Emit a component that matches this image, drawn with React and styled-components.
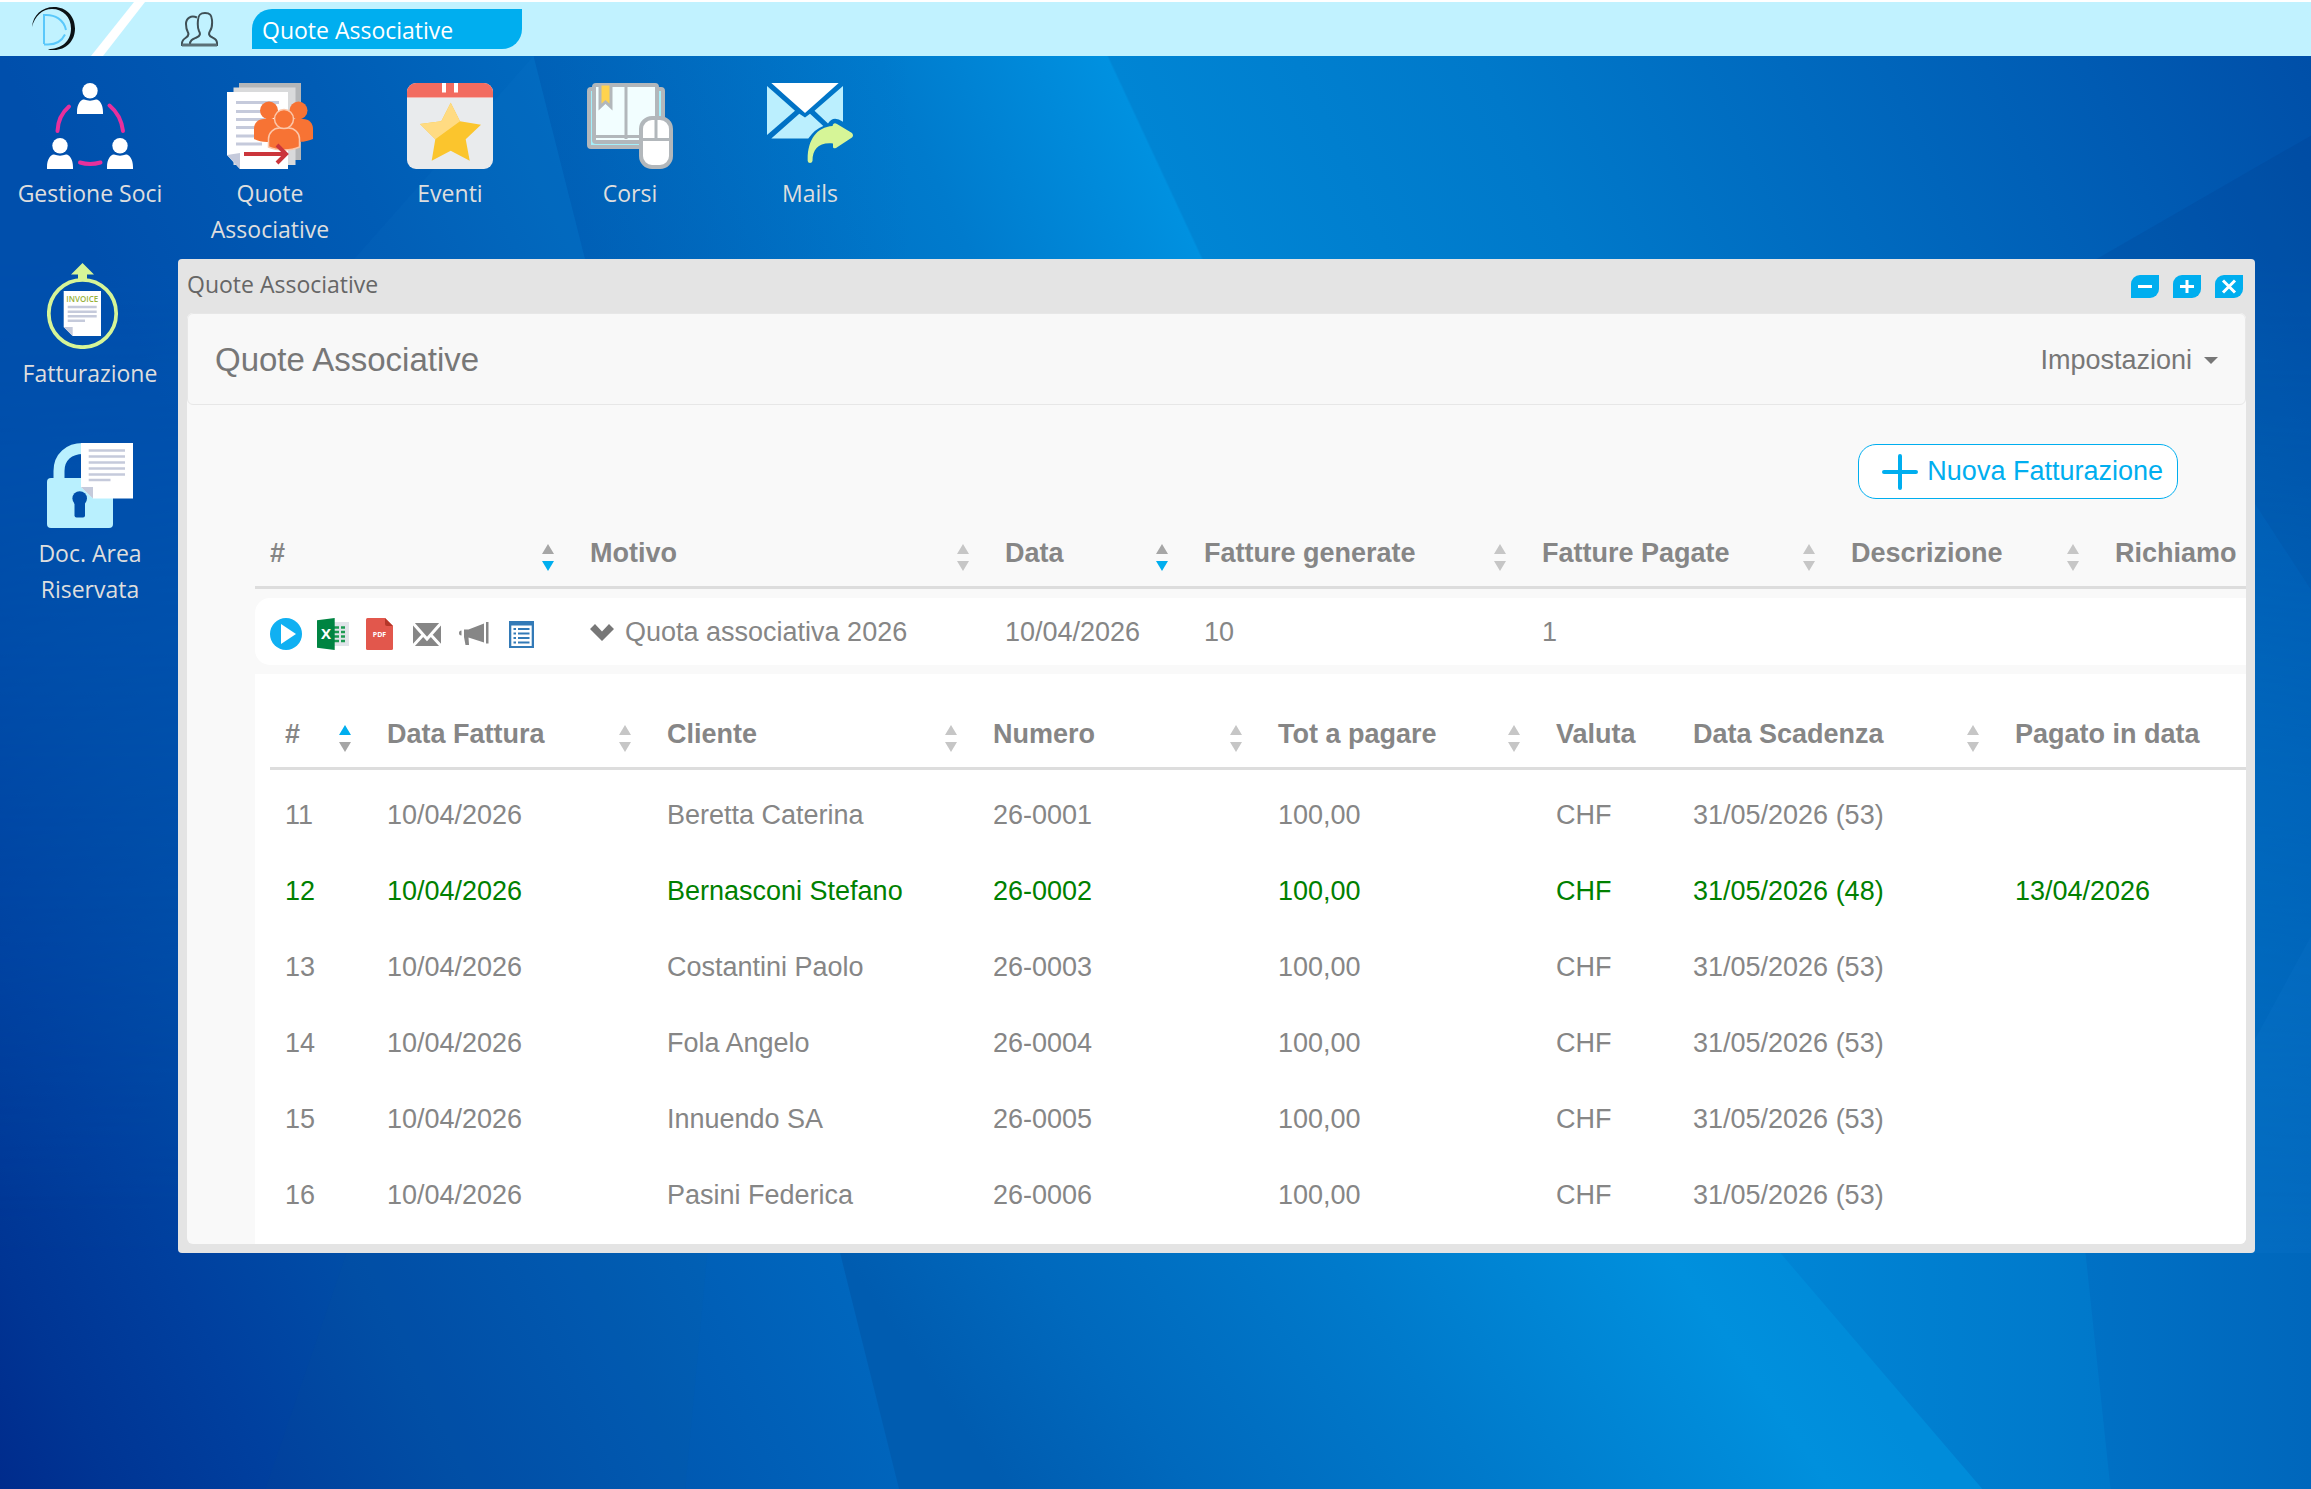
import React from "react";
import styled, { createGlobalStyle } from "styled-components";

const GlobalStyle = createGlobalStyle`
  * {
    box-sizing: border-box;
  }
  body {
    margin: 0;
    font-family: "Liberation Sans", Arial, sans-serif;
    font-size: 27px;
    color: #868686;
  }
  button {
    font: inherit;
    color: inherit;
    background: none;
    border: none;
    padding: 0;
    cursor: pointer;
  }
`;

const Page = styled.div`
  position: relative;
  min-height: 100vh;
  overflow: hidden;
`;

const WallpaperSvg = styled.svg`
  position: absolute;
  inset: 0;
  width: 100%;
  height: 100%;
  z-index: -1;
`;

/* ---------- top bar ---------- */

const TopBar = styled.header`
  display: flex;
  align-items: center;
  height: 56px;
  padding-left: 32px;
  background: #c1f2ff;
  border-top: 2px solid #fff;
`;
const LogoLink = styled.a`
  display: flex;
  margin-right: 15px;
`;
const Slash = styled.svg`
  width: 54px;
  height: 54px;
  margin-right: 36px;
`;
const UsersButton = styled.button`
  display: flex;
  margin-right: 34px;
`;
const TaskTab = styled.button`
  width: 270px;
  height: 40px;
  padding: 2px 0 0 10px;
  text-align: left;
  font-family: "Open Sans", sans-serif;
  font-size: 23px;
  font-weight: 500;
  line-height: 36px;
  color: #fff;
  background: #00aeef;
  border-radius: 20px 0 20px 0;
`;

/* ---------- desktop ---------- */

const Shortcuts = styled.nav`
  display: grid;
  grid-template-columns: repeat(5, 180px);
  grid-auto-rows: 180px;
  padding-top: 27px;
`;
const Shortcut = styled.button`
  grid-column: ${(props) => props.$column};
  grid-row: ${(props) => props.$row};
  display: flex;
  flex-direction: column;
  align-items: center;
  justify-content: flex-start;
  padding: 0 10px;
  font-family: "Open Sans", sans-serif;
  font-size: 23px;
  font-weight: 500;
  line-height: 36px;
  color: #dedede;
  svg {
    margin-bottom: 6px;
  }
`;

/* ---------- window ---------- */

const Window = styled.section`
  position: absolute;
  top: 259px;
  right: 56px;
  bottom: 236px;
  left: 178px;
  display: flex;
  flex-direction: column;
  padding: 0 9px 9px;
  background: #e4e4e4;
  border-radius: 4px;
`;
const TitleBar = styled.div`
  display: flex;
  justify-content: space-between;
  flex: 0 0 54px;
  padding-right: 3px;
`;
const WindowTitle = styled.h1`
  margin: 0;
  font-family: "Open Sans", sans-serif;
  font-size: 23px;
  font-weight: 500;
  line-height: 50px;
  color: #666;
`;
const WindowButtons = styled.div`
  display: flex;
  gap: 14px;
  padding-top: 16px;
`;
const WindowButton = styled.button`
  width: 28px;
  height: 23px;
  background: #00aeef;
  border-radius: 9px 0 9px 0;
  svg {
    display: block;
    margin: auto;
  }
`;
const WindowBody = styled.div`
  flex: 1;
  min-height: 0;
  overflow: hidden;
  background: #f9f9f9;
  border-radius: 6px;
`;
const NavBar = styled.div`
  display: flex;
  justify-content: space-between;
  align-items: center;
  height: 92px;
  padding: 2px 27px 0;
  background: #f8f8f8;
  border: 1px solid #e7e7e7;
  border-radius: 6px;
  color: #777;
`;
const Brand = styled.h2`
  margin: 0;
  font-size: 33px;
  font-weight: 400;
`;
const MenuButton = styled.button`
  display: flex;
  align-items: center;
  gap: 12px;
`;
const Content = styled.div`
  padding: 39px 68px 0;
`;
const Toolbar = styled.div`
  display: flex;
  justify-content: flex-end;
  margin-bottom: 12px;
`;
const NewButton = styled.button`
  display: flex;
  align-items: center;
  gap: 9px;
  height: 55px;
  padding: 0 14px 0 23px;
  color: #00aeef;
  background: #fff;
  border: 1px solid #00aeef;
  border-radius: 18px;
`;

/* ---------- tables ---------- */

const Table = styled.table`
  table-layout: fixed;
  width: ${(props) => props.$width}px;
  border-spacing: 0 9px;
  white-space: nowrap;
`;
const Th = styled.th`
  width: ${(props) => props.$width}px;
  height: 69px;
  padding: 0 21px 0 15px;
  text-align: left;
  border-bottom: 3px solid #ddd;
`;
const SortButton = styled.button`
  display: flex;
  justify-content: space-between;
  align-items: center;
  width: 100%;
  font-weight: 700;
  svg {
    flex: none;
    margin-top: 8px;
  }
`;
const Td = styled.td`
  height: 67px;
  padding: 1px 15px 0;
  background: #fff;
  &:first-child {
    border-radius: 15px 0 0 15px;
  }
`;
const InvoiceRow = styled.tr`
  color: ${(props) => (props.$paid ? "#008000" : "#868686")};
  td {
    padding-top: 6px;
  }
`;
const DetailCell = styled.td`
  padding: 18px 0 40px 15px;
  background: #fff;
`;
const Actions = styled.div`
  display: flex;
  gap: 15px;
  padding-top: 4px;
`;
const ActionButton = styled.button`
  display: flex;
  align-items: center;
  justify-content: center;
  flex: none;
  width: 32px;
  height: 32px;
`;
const ExpandButton = styled.button`
  display: flex;
  align-items: center;
  gap: 11px;
`;

/* ---------- data ---------- */

const billingColumns = [
  { label: "#", width: 320, sort: "down" },
  { label: "Motivo", width: 415, sort: "none" },
  { label: "Data", width: 199, sort: "down" },
  { label: "Fatture generate", width: 338, sort: "none" },
  { label: "Fatture Pagate", width: 309, sort: "none" },
  { label: "Descrizione", width: 264, sort: "none" },
  { label: "Richiamo", width: 200 },
];

const invoiceColumns = [
  { label: "#", width: 102, sort: "up" },
  { label: "Data Fattura", width: 280, sort: "none" },
  { label: "Cliente", width: 326, sort: "none" },
  { label: "Numero", width: 285, sort: "none" },
  { label: "Tot a pagare", width: 278, sort: "none" },
  { label: "Valuta", width: 137 },
  { label: "Data Scadenza", width: 322, sort: "none" },
  { label: "Pagato in data", width: 300 },
];

const invoices = [
  { id: 11, client: "Beretta Caterina", number: "26-0001", due: "31/05/2026 (53)" },
  { id: 12, client: "Bernasconi Stefano", number: "26-0002", due: "31/05/2026 (48)", paid: "13/04/2026" },
  { id: 13, client: "Costantini Paolo", number: "26-0003", due: "31/05/2026 (53)" },
  { id: 14, client: "Fola Angelo", number: "26-0004", due: "31/05/2026 (53)" },
  { id: 15, client: "Innuendo SA", number: "26-0005", due: "31/05/2026 (53)" },
  { id: 16, client: "Pasini Federica", number: "26-0006", due: "31/05/2026 (53)" },
];

/* ---------- drawings ---------- */

const Wallpaper = () => (
  <WallpaperSvg viewBox="0 0 1568 1010" preserveAspectRatio="none" aria-hidden="true">
    <defs>
      <linearGradient id="top" gradientUnits="userSpaceOnUse" x1="-18" y1="0" x2="1550" y2="0" gradientTransform="skewX(25)">
        <stop offset="0" stopColor="#004fac" />
        <stop offset=".13" stopColor="#005cb5" />
        <stop offset=".24" stopColor="#006abf" />
        <stop offset=".38" stopColor="#007bcd" />
        <stop offset=".479" stopColor="#0091e0" />
        <stop offset=".48" stopColor="#0085d4" />
        <stop offset=".64" stopColor="#0079ca" />
        <stop offset=".77" stopColor="#006abf" />
        <stop offset=".9" stopColor="#005bb3" />
        <stop offset="1" stopColor="#004fa8" />
      </linearGradient>
      <linearGradient id="b1" gradientUnits="userSpaceOnUse" x1="-475" y1="0" x2="175" y2="0" gradientTransform="skewX(25)">
        <stop offset="0" stopColor="#002b8c" />
        <stop offset=".12" stopColor="#003594" />
        <stop offset=".3" stopColor="#00409f" />
        <stop offset=".48" stopColor="#004da7" />
        <stop offset="1" stopColor="#0067be" />
      </linearGradient>
      <linearGradient id="b2" gradientUnits="userSpaceOnUse" x1="-25" y1="0" x2="613" y2="0" gradientTransform="skewX(35)">
        <stop offset="0" stopColor="#005cb0" />
        <stop offset=".2" stopColor="#0069bd" />
        <stop offset=".52" stopColor="#007acb" />
        <stop offset=".88" stopColor="#0090dd" />
        <stop offset="1" stopColor="#008cda" />
      </linearGradient>
      <linearGradient id="b3" gradientUnits="userSpaceOnUse" x1="1208" y1="0" x2="1430" y2="0">
        <stop offset="0" stopColor="#0085d5" />
        <stop offset="1" stopColor="#0078ca" />
      </linearGradient>
      <linearGradient id="b4" gradientUnits="userSpaceOnUse" x1="1415" y1="0" x2="1568" y2="0">
        <stop offset="0" stopColor="#0071c5" />
        <stop offset="1" stopColor="#0067bc" />
      </linearGradient>
      <linearGradient id="shade" x1="0" x2="1" y1="0" y2="0">
        <stop offset="0" stopColor="#003c96" stopOpacity=".18" />
        <stop offset="1" stopColor="#003c96" stopOpacity="0" />
      </linearGradient>
      <linearGradient id="fade" gradientUnits="userSpaceOnUse" x1="0" y1="176" x2="0" y2="850">
        <stop offset="0" stopColor="#fff" />
        <stop offset="1" stopColor="#000" />
      </linearGradient>
      <mask id="topMask" maskUnits="userSpaceOnUse" x="0" y="0" width="1568" height="1010">
        <rect width="1568" height="1010" fill="url(#fade)" />
      </mask>
    </defs>
    <path fill="url(#b1)" d="M0 0H640V1010H0z" />
    <path fill="url(#b2)" d="M500 0H1400V1010H610L570 850z" />
    <path fill="url(#b3)" d="M1208 0H1450V1010H1345L1208 850z" />
    <path fill="url(#b4)" d="M1415 0H1568V1010H1432L1415 850z" />
    <g mask="url(#topMask)">
      <rect width="1568" height="1010" fill="url(#top)" />
      <path fill="url(#shade)" d="M362 38H620V176H397z" />
      <path fill="#3ab0ff" opacity=".04" d="M362 38L397 176H240z" />
      <path fill="#00307c" opacity=".14" d="M1568 92L1422 176L1568 400z" />
    </g>
    <path fill="#38a8ff" opacity=".05" d="M1568 635L1500 760V850H1568z" />
    <path fill="#0a6a90" opacity=".05" d="M235 850L180 1010H465L480 850z" />
  </WallpaperSvg>
);

const Logo = () => (
  <svg width="44" height="44" viewBox="0 0 44 44" aria-hidden="true">
    <path d="M0 20C1 8 10 0 22 0s21 9 21 21.500S34 43 22 43c-3 0-5 0-6-1 14 0 23-8 23-20.500C39 10 31 2 20 2 10 2 3 9 0 20z" fill="#0b1215" />
    <path d="M12 37V8c11-1 20 5 22 15M12 37.500h4c8 0 14-4 17-10" fill="none" stroke="#5ac8fb" strokeWidth="2" />
  </svg>
);

const UsersIcon = () => (
  <svg width="37" height="35" viewBox="0 0 37 35" fill="none" stroke="#3f5056" strokeWidth="2" aria-hidden="true">
    <path d="M9 33c-.5-5 3-6 6.500-7.500 4-1.500 4-4 2.500-6.500C17 17 16.500 13 17 8c.4-5 2-7 7-7s6.500 2 7 7c.4 5-.5 9-2 11-1.500 2.500-1.500 5 2.500 6.500C34 27 36.500 28 36 33z" />
    <path d="M16 5.500C10 3 5 6 5 12c0 4 .5 6 2 8.500 1 2 0 4-2.500 5.500C2 27.500.5 29 1 33h8" />
    <path d="M1 33h35" stroke="#5b7077" strokeWidth="3" />
  </svg>
);

const Person = ({ x, y }) => (
  <g transform={`translate(${x} ${y})`}>
    <circle cx="13" cy="7.700" r="7.700" />
    <path d="M0 31v-2C0 21 4 16 7 16.500c4 1.500 8 1.500 12 0 3-.5 7 4.500 7 12.500v2z" />
  </g>
);

const MembersIcon = () => (
  <svg width="86" height="86" viewBox="0 0 86 86" fill="#fff" aria-hidden="true">
    <Person x={30} y={0} />
    <Person x={0} y={55} />
    <Person x={60} y={55} />
    <g fill="none" stroke="#e8309c" strokeWidth="4" strokeLinecap="round">
      <path d="M22 23.500Q11 33 10.500 48" />
      <path d="M62.500 22.500Q74 32 76 48" />
      <path d="M33 79.500Q43 82.500 53.500 79.500" />
    </g>
  </svg>
);

const FeesIcon = () => (
  <svg width="86" height="86" viewBox="0 0 86 86" aria-hidden="true">
    <path fill="#b4b6b8" d="M12 0H74V77H12z" />
    <path fill="#d9dadb" d="M6.500 4.500H68.500V82H6.500z" />
    <path fill="#fff" d="M0 9H61V86H13L0 72z" />
    <path fill="#c5cadb" d="M0 72L13 70V86z" />
    <path stroke="#c5cadb" strokeWidth="3" d="M9 19.500H52M9 28.500H40M9 36.500H38M9 44.500H34M9 53H30M9 61H35" />
    <g fill="#f77334">
      <circle cx="42" cy="27.500" r="9" />
      <circle cx="71.500" cy="27.500" r="9" />
      <path d="M27 56V46c0-6 4-10 10-10h39c6 0 10 4 10 10v10c-8 3-12 3-18 3H40c-5 0-9-1-13-3z" />
      <path d="M41.500 64V56c0-6 5-11 11-11h9c6 0 11 5 11 11v8c-9 4-22 4-31 0z" stroke="#fcc7aa" strokeWidth="1.500" />
      <circle cx="57" cy="36" r="9.500" stroke="#fcc7aa" strokeWidth="1.500" />
    </g>
    <path fill="none" stroke="#cb353b" strokeWidth="4" d="M17 71H59M50 62L59 71L50 80" />
  </svg>
);

const EventsIcon = () => (
  <svg width="86" height="86" viewBox="0 0 86 86" aria-hidden="true">
    <rect width="86" height="86" rx="9" fill="#e9ebed" />
    <path fill="#f26c60" d="M0 14V9a9 9 0 0 1 9-9H77a9 9 0 0 1 9 9v5z" />
    <path fill="#f4b3ae" d="M0 14H86v1H0z" />
    <path stroke="#fff" strokeWidth="4" d="M37 0V9.500M49 0V9.500" />
    <path fill="#fbc52d" d="M43.700 19.700L53 38.300L74 41.700L58.700 56.300L62.700 77.700L43.700 67.700L24.700 77.700L28.300 56.300L13 41L34.300 38.300z" />
    <path fill="#ffdb82" d="M43.700 19.700L53 38.300L28.300 56.300L13 41L34.300 38.300z" />
  </svg>
);

const CoursesIcon = () => (
  <svg width="86" height="86" viewBox="0 0 86 86" stroke="#b2b7bb" strokeWidth="4" aria-hidden="true">
    <rect x="2" y="6" width="74" height="58" rx="2" fill="#a3f0fb" />
    <rect x="7" y="2" width="63" height="57" rx="2" fill="#f2feff" />
    <path fill="none" d="M8 53.500H69M39 1V56" strokeWidth="3" />
    <path d="M13 1V24L18.500 19L24 24V1z" fill="#ffd34d" strokeWidth="3" />
    <rect x="54" y="35" width="30" height="49" rx="11" fill="#fff" />
    <path d="M54 56.500H84M69 35V56" strokeWidth="3" />
  </svg>
);

const MailsIcon = () => (
  <svg width="86" height="86" viewBox="0 0 86 86" fill="#bbeffe" aria-hidden="true">
    <path fill="#fff" d="M4.300 0H71.700L38 30z" />
    <path d="M0 3L28 27.700L0 52z" />
    <path d="M76 3V38.700Q66 32 61 40.500L47.500 27.700z" />
    <path d="M4.300 55.500L32.300 30.700L38 34.500L43 30.700L56.300 43Q48 46 41.300 55.500z" />
    <path fill="#d6f597" d="M40.700 78C40 58 49 44 65.700 43V42Q67 39 70 41L85 50Q87 52.500 85 54.500L69 65Q66 66 66 64V60.500C52 59 45.500 66 45.500 78Q45 80 43 80T40.700 78z" />
  </svg>
);

const InvoiceIcon = () => (
  <svg width="86" height="86" viewBox="0 0 86 86" aria-hidden="true">
    <circle cx="35.500" cy="50.500" r="33.700" fill="none" stroke="#d6f597" strokeWidth="3.700" />
    <path fill="#d6f597" d="M35.500 0L47 11.500H40V17H31V11.500H24z" />
    <path fill="#fff" d="M16.700 28H54V73H25.700L16.700 64z" />
    <path fill="#c5cadb" d="M16.700 64H25.700V73z" />
    <text x="35.300" y="38.500" textAnchor="middle" fontFamily="Open Sans, sans-serif" fontSize="8" fontWeight="600" fill="#97b23c">
      INVOICE
    </text>
    <path stroke="#c5cadb" strokeWidth="2.500" d="M20.700 44H49.700M20.700 48.700H49.700M20.700 53.300H49.700M20.700 57.700H38" />
  </svg>
);

const ReservedIcon = () => (
  <svg width="86" height="86" viewBox="0 0 86 86" aria-hidden="true">
    <path fill="none" stroke="#b9f0fe" strokeWidth="11" d="M12 36V28C12 14 22 5.500 36 5.500" />
    <rect y="35" width="66" height="50" rx="4" fill="#b9f0fe" />
    <circle cx="32.700" cy="55.500" r="7.300" fill="#004fab" />
    <rect x="27.500" y="56" width="10.500" height="18.500" rx="2" fill="#004fab" />
    <path fill="#fff" d="M34 0H86V55.500H46L34 44z" />
    <path fill="#c5cadb" d="M34 44H46V55.500z" />
    <path stroke="#c5cadb" strokeWidth="2.500" d="M41.700 7.500H78M41.700 13.500H78M41.700 19.500H78M41.700 25.500H78M41.700 31.500H78M41.700 37H63.500" />
  </svg>
);

const SortIcon = ({ sort }) => {
  const idle = sort === "none" ? "#c6c6c6" : "#a6a6a6";
  return (
    <svg width="12" height="27" viewBox="0 0 12 27" aria-hidden="true">
      <path d="M6 0L12 10H0z" fill={sort === "up" ? "#00aeef" : idle} />
      <path d="M0 17H12L6 27z" fill={sort === "down" ? "#00aeef" : idle} />
    </svg>
  );
};

const PlayIcon = () => (
  <svg width="32" height="32" viewBox="0 0 32 32">
    <circle cx="16" cy="16" r="16" fill="#10b0f2" />
    <path d="M11 6L26 16L11 26z" fill="#fff" />
  </svg>
);

const ExcelIcon = () => (
  <svg width="32" height="32" viewBox="0 0 32 32">
    <path fill="#e0e4e9" d="M17 4H32V28H17z" />
    <path stroke="#1c9a52" strokeWidth="2.500" d="M17 9.500H22M24 9.500H28M17 14H22M24 14H28M17 18.500H22M24 18.500H28M17 23H22M24 23H28" />
    <path fill="#008442" d="M0 2.300L17.700 0V32L0 29.700z" />
    <text x="9" y="21" textAnchor="middle" fontFamily="Open Sans, sans-serif" fontSize="15" fontWeight="700" fill="#fff">
      X
    </text>
  </svg>
);

const PdfIcon = () => (
  <svg width="28" height="32" viewBox="0 0 28 32">
    <path fill="#e2574c" d="M1.500 0H19L27 8V30.500Q27 32 25.500 32H1.500Q0 32 0 30.500V1.500Q0 0 1.500 0z" />
    <path fill="#b53629" d="M19 0L27 8H21Q19 8 19 6z" />
    <text x="13.500" y="19" textAnchor="middle" fontFamily="Open Sans, sans-serif" fontSize="7" fontWeight="700" fill="#fff">
      PDF
    </text>
  </svg>
);

const EnvelopeIcon = () => (
  <svg width="28" height="23" viewBox="0 0 28 23">
    <path fill="#868686" d="M0 0H28V23H0z" />
    <path fill="none" stroke="#fff" strokeWidth="3" d="M-1 -1L14 16L29 -1M-1 24L10.500 11.500M29 24L17.500 11.500" />
  </svg>
);

const MegaphoneIcon = () => (
  <svg width="30" height="24" viewBox="0 0 30 24" fill="#868686">
    <path d="M2.500 8.500Q0 8.500 0 11T2.500 13.500z" />
    <path d="M5 7.500H9.500L25 1.500V20.500L9.500 15.500L10 23H6.500L5 15z" />
    <path d="M27 0H29.500V21.500H27z" />
  </svg>
);

const ListIcon = () => (
  <svg width="25" height="27" viewBox="0 0 25 27">
    <path fill="#337ab7" d="M0 0H25V27H0z" />
    <path fill="#fff" d="M2.300 4.500H22.700V25H2.300z" />
    <path stroke="#337ab7" strokeWidth="2" d="M4.500 8H7M9 8H20.500M4.500 12.500H7M9 12.500H20.500M4.500 17H7M9 17H20.500M4.500 21.500H7M9 21.500H20.500" />
  </svg>
);

const shortcuts = [
  { label: "Gestione Soci", Icon: MembersIcon, column: 1, row: 1 },
  { label: "Quote Associative", Icon: FeesIcon, column: 2, row: 1 },
  { label: "Eventi", Icon: EventsIcon, column: 3, row: 1 },
  { label: "Corsi", Icon: CoursesIcon, column: 4, row: 1 },
  { label: "Mails", Icon: MailsIcon, column: 5, row: 1 },
  { label: "Fatturazione", Icon: InvoiceIcon, column: 1, row: 2 },
  { label: "Doc. Area Riservata", Icon: ReservedIcon, column: 1, row: 3 },
];

const actions = [
  { label: "Avvia", Icon: PlayIcon },
  { label: "Esporta Excel", Icon: ExcelIcon },
  { label: "Esporta PDF", Icon: PdfIcon },
  { label: "Invia email", Icon: EnvelopeIcon },
  { label: "Richiamo", Icon: MegaphoneIcon },
  { label: "Dettagli", Icon: ListIcon },
];

const windowControls = [
  { label: "Riduci", d: "M1 7.500H15" },
  { label: "Ingrandisci", d: "M1 7.500H15M8 1V14" },
  { label: "Chiudi", d: "M2 1.500L14 13.500M14 1.500L2 13.500" },
];

const HeaderRow = ({ columns }) => (
  <thead>
    <tr>
      {columns.map(({ label, width, sort }) => (
        <Th key={label} $width={width} scope="col">
          {sort ? (
            <SortButton type="button">
              {label}
              <SortIcon sort={sort} />
            </SortButton>
          ) : (
            label
          )}
        </Th>
      ))}
    </tr>
  </thead>
);

const InvoiceTable = () => (
  <Table $width={2030}>
    <HeaderRow columns={invoiceColumns} />
    <tbody>
      {invoices.map((invoice) => (
        <InvoiceRow key={invoice.id} $paid={Boolean(invoice.paid)}>
          <Td>{invoice.id}</Td>
          <Td>10/04/2026</Td>
          <Td>{invoice.client}</Td>
          <Td>{invoice.number}</Td>
          <Td>100,00</Td>
          <Td>CHF</Td>
          <Td>{invoice.due}</Td>
          <Td>{invoice.paid}</Td>
        </InvoiceRow>
      ))}
    </tbody>
  </Table>
);

const BillingTable = () => (
  <Table $width={2045}>
    <HeaderRow columns={billingColumns} />
    <tbody>
      <tr>
        <Td>
          <Actions>
            {actions.map(({ label, Icon }) => (
              <ActionButton key={label} type="button" aria-label={label}>
                <Icon />
              </ActionButton>
            ))}
          </Actions>
        </Td>
        <Td>
          <ExpandButton type="button">
            <svg width="24" height="17" viewBox="0 0 24 17" aria-hidden="true">
              <path fill="#777" d="M5 0L0 5L12 17L24 5L19 0L12 7.500z" />
            </svg>
            Quota associativa 2026
          </ExpandButton>
        </Td>
        <Td>10/04/2026</Td>
        <Td>10</Td>
        <Td>1</Td>
        <Td />
        <Td />
      </tr>
      <tr>
        <DetailCell colSpan={7}>
          <InvoiceTable />
        </DetailCell>
      </tr>
    </tbody>
  </Table>
);

const App = () => {
  return (
    <Page>
      <GlobalStyle />
      <Wallpaper />

      <TopBar>
        <LogoLink href="#" aria-label="Home">
          <Logo />
        </LogoLink>
        <Slash viewBox="0 0 54 54" aria-hidden="true">
          <path fill="#fff" d="M43 0H54L12 54H0z" />
        </Slash>
        <UsersButton type="button" aria-label="Utenti">
          <UsersIcon />
        </UsersButton>
        <TaskTab type="button">Quote Associative</TaskTab>
      </TopBar>

      <Shortcuts>
        {shortcuts.map(({ label, Icon, column, row }) => (
          <Shortcut key={label} type="button" $column={column} $row={row}>
            <Icon />
            {label}
          </Shortcut>
        ))}
      </Shortcuts>

      <Window>
        <TitleBar>
          <WindowTitle>Quote Associative</WindowTitle>
          <WindowButtons>
            {windowControls.map(({ label, d }) => (
              <WindowButton key={label} type="button" aria-label={label}>
                <svg width="16" height="15" viewBox="0 0 16 15" aria-hidden="true">
                  <path d={d} stroke="#fff" strokeWidth="3" />
                </svg>
              </WindowButton>
            ))}
          </WindowButtons>
        </TitleBar>

        <WindowBody>
          <NavBar>
            <Brand>Quote Associative</Brand>
            <MenuButton type="button">
              Impostazioni
              <svg width="14" height="7" viewBox="0 0 14 7" aria-hidden="true">
                <path d="M0 0H14L7 7z" fill="#777" />
              </svg>
            </MenuButton>
          </NavBar>
          <Content>
            <Toolbar>
              <NewButton type="button">
                <svg width="36" height="36" viewBox="0 0 36 36" aria-hidden="true">
                  <path d="M2 18H34M18 2V34" stroke="#00aeef" strokeWidth="4" strokeLinecap="round" />
                </svg>
                Nuova Fatturazione
              </NewButton>
            </Toolbar>
            <BillingTable />
          </Content>
        </WindowBody>
      </Window>
    </Page>
  );
};

export default App;
